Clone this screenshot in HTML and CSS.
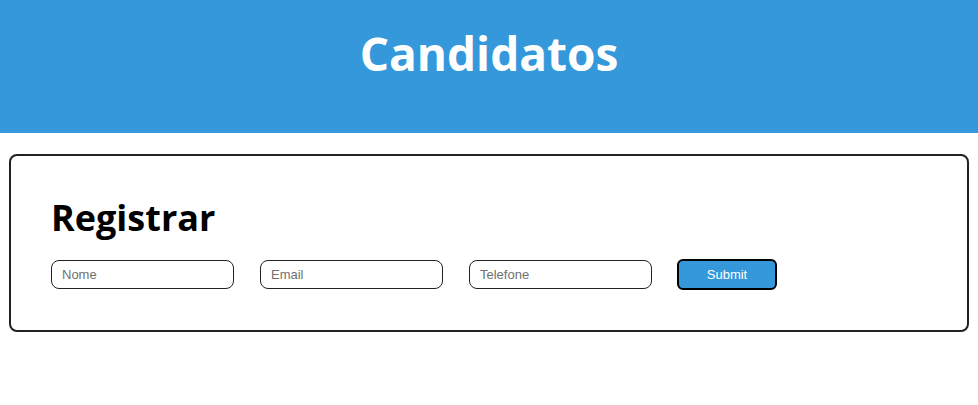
FILE: index.html
```html
<!DOCTYPE html>
<html lang="pt">
<head>
<meta charset="utf-8">
<title>Candidatos</title>
<link rel="stylesheet" href="styles.css">
</head>
<body>
<header class="topbar">
  <h1 class="title">Candidatos</h1>
</header>
<main class="card">
  <h2 class="card-title">Registrar</h2>
  <form class="form">
    <input class="field" type="text" placeholder="Nome">
    <input class="field" type="email" placeholder="Email">
    <input class="field" type="tel" placeholder="Telefone">
    <button class="submit" type="button">Submit</button>
  </form>
</main>
</body>
</html>
```
FILE: styles.css
```css
html, body {
  margin: 0;
  padding: 0;
  background: #ffffff;
}
body {
  font-family: "Open Sans", "DejaVu Sans", sans-serif;
}
.topbar {
  background: #3498db;
  height: 133px;
  display: flex;
  justify-content: center;
  padding-top: 23px;
  box-sizing: border-box;
}
.title {
  margin: 0;
  color: #ffffff;
  font-size: 46px;
  font-weight: 700;
  line-height: 60px;
  letter-spacing: 0;
}
.card {
  display: block;
  margin: 21px 9px 0 9px;
  border: 2px solid #222222;
  border-radius: 8px;
  padding: 38px 40px 40px 40px;
}
.card-title {
  margin: 0 0 17px 0;
  font-size: 36px;
  font-weight: 700;
  line-height: 48px;
  color: #000000;
}
.form {
  display: flex;
  align-items: center;
  gap: 26px;
}
.field {
  width: 183px;
  height: 29px;
  box-sizing: border-box;
  border: 1px solid #222222;
  border-radius: 8px;
  padding: 0 10px;
  font-family: "Liberation Sans", Arial, sans-serif;
  font-size: 13px;
  margin: 0;
}
.field::placeholder {
  color: #707070;
}
.submit {
  width: 100px;
  height: 31px;
  box-sizing: border-box;
  background: #3498db;
  border: 2px solid #000000;
  border-radius: 6px;
  color: #ffffff;
  font-family: "Liberation Sans", Arial, sans-serif;
  font-size: 13px;
  margin: 0 0 0 -1px;
}
```
